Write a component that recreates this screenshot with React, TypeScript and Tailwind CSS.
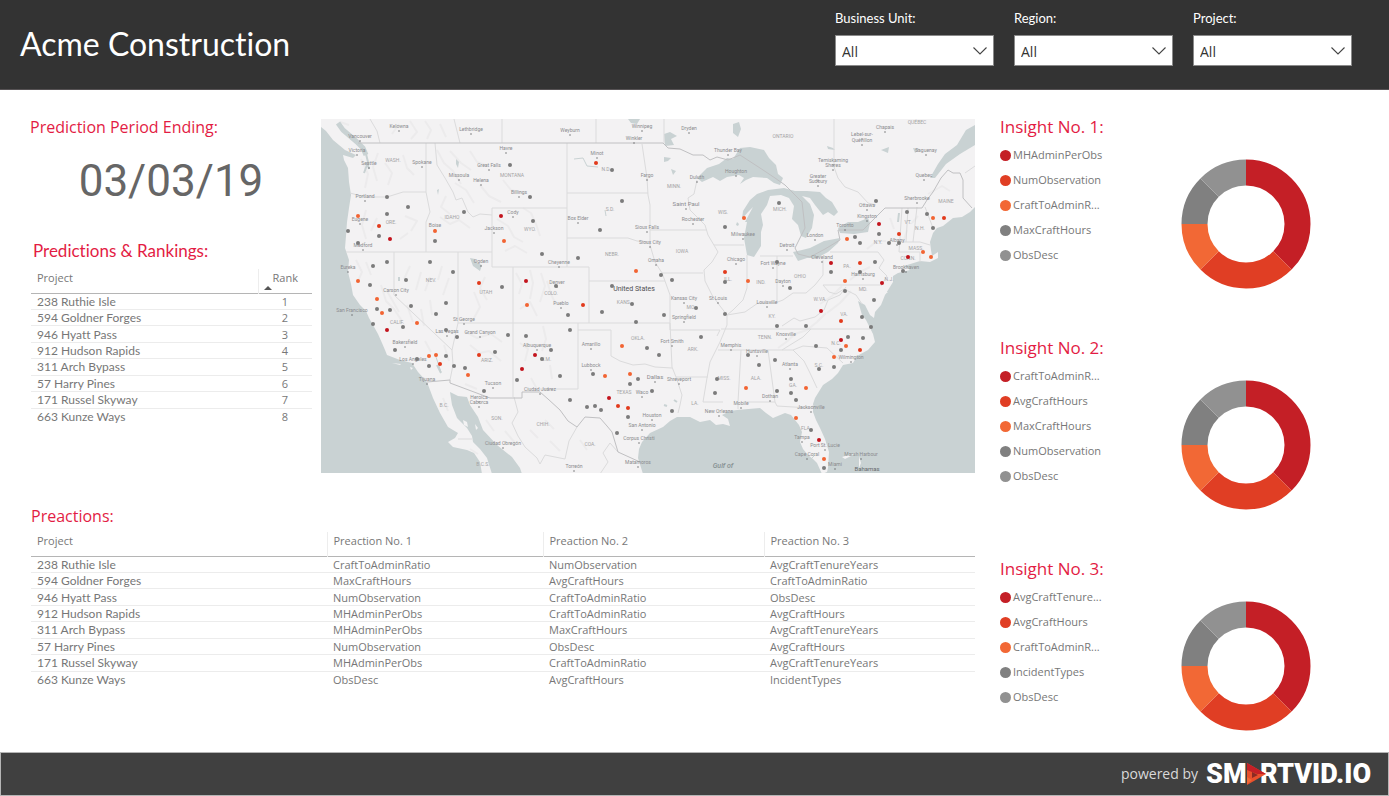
import { clsx } from 'clsx';

type Point = [number, number];

const DARK = '#c41f26';
const RED = '#e03e24';
const ORANGE = '#f26835';
const GRAY = '#808080';
const LIGHT = '#919191';
const SLICE_COLORS = [DARK, RED, ORANGE, GRAY, LIGHT];
const SLICE_VALUES = [3, 2, 1, 1, 1];

const filters = [
    { id: 'unit', label: 'Business Unit:' },
    { id: 'region', label: 'Region:' },
    { id: 'project', label: 'Project:' },
];

const rows = [
    ['238 Ruthie Isle', 'CraftToAdminRatio', 'NumObservation', 'AvgCraftTenureYears'],
    ['594 Goldner Forges', 'MaxCraftHours', 'AvgCraftHours', 'CraftToAdminRatio'],
    ['946 Hyatt Pass', 'NumObservation', 'CraftToAdminRatio', 'ObsDesc'],
    ['912 Hudson Rapids', 'MHAdminPerObs', 'CraftToAdminRatio', 'AvgCraftHours'],
    ['311 Arch Bypass', 'MHAdminPerObs', 'MaxCraftHours', 'AvgCraftTenureYears'],
    ['57 Harry Pines', 'NumObservation', 'ObsDesc', 'AvgCraftHours'],
    ['171 Russel Skyway', 'MHAdminPerObs', 'CraftToAdminRatio', 'AvgCraftTenureYears'],
    ['663 Kunze Ways', 'ObsDesc', 'AvgCraftHours', 'IncidentTypes'],
];

const insights = [
    { title: 'Insight No. 1:', items: ['MHAdminPerObs', 'NumObservation', 'CraftToAdminR...', 'MaxCraftHours', 'ObsDesc'] },
    { title: 'Insight No. 2:', items: ['CraftToAdminR...', 'AvgCraftHours', 'MaxCraftHours', 'NumObservation', 'ObsDesc'] },
    { title: 'Insight No. 3:', items: ['AvgCraftTenure...', 'AvgCraftHours', 'CraftToAdminR...', 'IncidentTypes', 'ObsDesc'] },
];

// Oceans, gulfs and lakes
const water = [
    'M321 127L326 131L333 140L345 150L356 155L353 158L343 155L344 160L348 168L349 182L351 195L349 208L347 222L346 236L345 248L349 260L348 272L351 284L353 295L360 305L366 311L369 318L373 325L378 334L382 343L385 350L387 355L400 360L412 363L418 372L427 382L430 390L433 398L440 413L448 427L458 433L455 438L448 442L453 447L467 450L474 453L480 462L482 474L321 474Z',
    'M450 392L458 396L467 397L470 405L478 417L483 430L497 445L512 457L520 468L522 474L492 474L487 458L480 449L473 442L472 436L467 428L457 418L452 405Z',
    'M643 474L638 458L639 449L642 442L650 433L663 427L670 421L677 417L690 417L700 422L710 420L716 425L723 424L730 426L728 419L722 415L730 411L737 410L760 408L766 413L773 418L785 413L791 415L795 420L799 425L802 432L800 442L803 449L808 455L813 459L817 463L822 474L827 472L828 468L829 452L825 439L820 428L816 420L813 412L813 404L815 398L823 385L832 379L838 373L843 365L853 363L857 356L868 350L875 342L873 334L870 328L866 320L862 315L858 301L865 305L870 315L874 318L875 312L881 305L885 295L893 282L893 276L898 273L910 270L904 266L920 261L930 262L938 258L938 252L932 256L931 250L930 242L933 233L937 228L943 226L953 218L962 217L970 212L975 207V474Z',
    'M975 125L966 130L957 145L945 154L938 164L930 178L935 178L946 164L960 154L975 145Z',
    'M697 178L707 168L719 164L727 158L733 159L740 148L750 147L764 150L769 158L776 165L778 174L783 178L780 185L774 183L767 178L753 177L746 180L740 184L744 178L739 175L727 177L720 181L713 177L702 182Z',
    'M747 255L744 238L747 222L745 222L753 207L748 212L742 219L743 211L750 200L757 194L768 190L784 188L795 191L807 191L820 192L826 198L832 202L838 212L834 216L828 212L823 215L815 205L810 198L802 196L810 204L814 215L812 228L806 238L801 236L798 225L792 219L794 206L789 198L781 195L770 196L767 205L761 214L763 225L761 232L761 246L754 257Z',
    'M793 252L802 250L810 248L824 241L840 238L838 243L828 252L817 258L807 258L798 261Z',
    'M838 228L848 222L858 222L868 218L870 223L868 232L854 234L840 233Z',
    'M470 258L475 259L477 263L482 265L480 271L473 266Z',
    'M733 124L739 122L741 129L738 137L733 133Z',
    'M628 119H640L637 124L631 123Z',
    'M664 134L670 132L677 136L671 139L674 145L665 146Z',
    'M664 157L671 158L668 161L664 162Z',
    'M671 169L676 171L673 175Z',
    'M827 146L833 148L835 150L828 149Z',
    'M881 150L889 147L888 153Z',
    'M913 148L920 149L915 153Z',
    'M737 222L739 224L738 226L736 225Z',
    'M437 190L439 189L438 195Z',
    'M456 159L459 162L458 168L456 164Z',
];

const nationalBorder = [
    'M358 143H663L668 148L680 149L693 155L703 155L710 160L717 157L728 160L740 155L760 168L775 178L785 185L802 202L805 228L795 248L798 254L810 257L825 249L840 240L838 230H863L885 208H922L927 200L933 192L941 178L948 170L953 173L960 173L963 180L963 198L972 208',
    'M427 382L450 380L450 383L490 398H522V392H540L548 399L560 410L568 421L577 427L585 417L600 418L607 426L612 432L618 452L629 457L640 462',
];

const stateLines = [
    'M426 143V192M350 193L365 197L387 197L403 192L426 192L430 212L426 222V252M346 252H492M435 143L437 165L445 178L453 192L456 200L462 198L468 212L473 217L480 214L492 215',
    'M492 208H567M492 208V267M567 143V267M492 267H589V323M513 267V397M394 252V295L452 350L453 365L450 380M458 252V323L452 350M458 323H670',
    'M567 193H648M567 238H628L637 241L648 242M642 144L647 178L648 195L650 205V245L655 262L662 273L665 281L670 295V330M589 281H665M650 230H707M662 273H703',
    'M697 180L694 194L688 198L690 210L705 225L708 235L718 252L712 262L704 270L705 281L712 295L720 306L727 315V325L720 342L710 362L707 378L703 402H723',
    'M714 245H744M747 255V288L743 300L733 310L727 315L745 312L758 303L775 303L783 300L793 293L806 293L815 285L823 275V260M760 256H793M777 256V302',
    'M578 323V389H540M578 330H611V356L620 361L633 365L645 364L655 367L672 368M670 323L672 367L676 377L682 395L680 405L678 413M671 330H720L717 336M676 377H708',
    'M721 329H870M718 350H793M741 350L738 402V409M768 350L775 402L777 406L810 408L814 405M745 402H775M793 350L804 361L810 373L817 388M793 350L803 346L827 348L843 363M782 350L790 345L803 337L811 329',
    'M823 285H880M830 252H878L884 260L879 268L887 276L881 286M902 208L899 252M899 242H920L930 245M899 252L920 252V262M908 208L906 242M917 207L913 242M925 207L933 228M823 285L829 292L836 294L844 289L856 295L862 304',
    'M782 326L794 318L800 321L815 317L824 310L828 300L840 295L846 287M370 119L377 131L380 143M454 119L460 143M502 119V143M596 119V143M664 119V143M834 119V167L838 178L845 187L858 192L868 203L876 205',
    'M514 397L518 412L512 423L518 436L525 447L537 458L540 464L545 455L565 459L569 441L577 427M600 474L608 462L603 453L610 443L618 452M458 439H472M965 173L975 166',
];

// Mountain relief, faint strokes
const relief = [
    'M356 260L362 272L358 281M366 262L371 275M381 285L386 301L394 309L402 321M387 291L399 312M410 266L404 279M421 272L416 290M430 277L425 291M442 266L438 280M449 278L443 295M407 305L413 322M421 309L424 326M430 300L432 315',
    'M437 150L444 163L453 171L461 184M450 151L461 163L471 170M470 151L477 162L488 166M446 196L441 207L450 214M455 183L466 190L474 203M480 185L489 196L501 202M503 180L511 190L523 193M440 217L450 224L459 220L470 228',
    'M497 219L508 226L514 237L523 242M523 208L531 213L536 224L540 236M505 251L515 246L527 253M516 273L522 284L519 294M530 270L533 283L530 299M541 273L545 286L540 302M547 281L551 294L556 305M520 309L530 302L537 316',
    'M361 159L368 174L365 188M378 153L373 167L377 181M385 163L392 173L388 185M403 155L407 168L414 175M366 210L362 225L366 239M377 218L371 231M405 216L417 221L411 231M400 239L408 233M485 277L480 288L487 300M474 292L480 307L474 318',
    'M466 332L477 338L491 334L502 342M470 345L480 353L489 351L501 361M520 343L528 349L525 361M543 326L546 339L542 351M531 378L537 389M550 365L552 379M425 341L431 352M444 345L449 361M465 384L477 389',
    'M786 342L795 334L807 330L817 322L826 313M778 348L789 340M820 304L832 296L842 286M827 313L840 303L851 291M850 280L860 272L870 267M867 249L877 241L886 241M890 218L894 229M907 230L904 240M928 194L942 186L950 191M912 223L918 216',
    'M399 124L392 134M410 121L417 132L411 139M425 121L431 130L427 139M440 124L446 137M340 122L349 125M530 430L538 438M545 420L554 429M486 420L494 431M505 431L515 443M550 441L560 451M580 440L587 450M443 398L448 411M470 449L478 454',
];

const cities: [string, number, number, number?][] = [
    ['Kelowna', 399, 128], ['Vancouver', 360, 138], ['Victoria', 357, 152], ['Seattle', 369, 165], ['Spokane', 422, 164], ['Lethbridge', 471, 131],
    ['Havre', 506, 150], ['Great Falls', 489, 167], ['Missoula', 459, 177], ['Helena', 481, 182], ['Billings', 519, 194], ['Portland', 365, 198],
    ['Eugene', 360, 221], ['Medford', 363, 247], ['Boise', 435, 227], ['Cody', 513, 214], ['Jackson', 494, 230], ['Ogden', 481, 263],
    ['Eureka', 348, 269], ['Carson City', 396, 292], ['San Francisco', 352, 312], ['St George', 464, 321], ['Las Vegas', 447, 333],
    ['Grand Canyon', 480, 334], ['Bakersfield', 405, 344], ['Los Angeles', 413, 361], ['Tijuana', 427, 381], ['Tucson', 493, 385],
    ['Heroica', 479, 399], ['Caborca', 479, 404], ['Ciudad Obregón', 503, 445], ['Weyburn', 570, 132], ['Winnipeg', 642, 128], ['Winkler', 634, 140],
    ['Dryden', 689, 130], ['Thunder Bay', 728, 152], ['Minot', 597, 155], ['Fargo', 647, 177], ['Duluth', 697, 179], ['Houghton', 736, 173],
    ['Saint Paul', 686, 206, 6], ['Rochester', 693, 221], ['Box Elder', 578, 220], ['Sioux Falls', 647, 229], ['Sioux City', 650, 244],
    ['Omaha', 656, 262], ['Milwaukee', 743, 236], ['Chicago', 736, 261], ['Cheyenne', 559, 264], ['Denver', 557, 284],
    ['Pueblo', 561, 305], ['Kansas City', 684, 300], ['St Louis', 718, 300], ['Springfield', 684, 319], ['Amarillo', 591, 346],
    ['Fort Smith', 672, 343], ['Memphis', 731, 347], ['Albuquerque', 537, 347], ['Lubbock', 591, 367], ['Dallas', 655, 379, 6],
    ['Shreveport', 679, 381], ['Waco', 642, 394], ['Ciudad Juárez', 540, 391], ['Houston', 652, 417], ['San Antonio', 642, 427],
    ['Corpus Christi', 639, 440], ['Matamoros', 638, 464], ['Torreón', 574, 468], ['New Orleans', 719, 413], ['Mobile', 741, 405],
    ['Huntsville', 757, 353], ['Chapais', 885, 129], ['Lebel-sur-', 862, 136], ['Quévillon', 862, 142], ['Saguenay', 926, 152],
    ['Temiskaming', 833, 162], ['Shores', 833, 167], ['Greater', 818, 178], ['Sudbury', 818, 183], ['Quebec', 924, 177],
    ['Sherbrooke', 917, 200], ['Ottawa', 867, 207], ['Kingston', 867, 218], ['Toronto', 845, 227], ['London', 815, 237],
    ['Detroit', 787, 247], ['Cleveland', 822, 259], ['Fort Wayne', 773, 265], ['Dayton', 783, 283], ['Albany', 897, 242],
    ['Brookhaven', 906, 269], ['Harrisburg', 863, 276], ['Louisville', 767, 304], ['Knoxville', 786, 336], ['Wilmington', 851, 359],
    ['Atlanta', 790, 366], ['Dothan', 770, 398], ['Jacksonville', 811, 409], ['Tampa', 802, 439], ['Port St. Lucie', 825, 447],
    ['Cape Coral', 807, 456], ['Miami', 835, 466], ['Marsh Harbour', 861, 456],
];

const states: [string, number, number][] = [
    ['WASH.', 393, 162], ['MONTANA', 512, 177], ['ORE.', 391, 224], ['IDAHO', 452, 219], ['WYO.', 530, 231], ['NEV.', 431, 282],
    ['UTAH', 486, 294], ['COLO.', 551, 295], ['CALIF.', 397, 324], ['ARIZ.', 487, 362], ['N.M.', 546, 361], ['N.D.', 606, 171],
    ['S.D.', 610, 211], ['NEBR.', 612, 256], ['MINN.', 674, 188], ['WIS.', 723, 214], ['IOWA', 682, 253], ['ILL.', 728, 281],
    ['IND.', 761, 284], ['KANS.', 624, 304], ['MO.', 691, 309], ['OKLA.', 638, 340], ['ARK.', 693, 351], ['TEXAS', 624, 394],
    ['LA.', 695, 405], ['MISS.', 724, 380], ['ALA.', 756, 380], ['GA.', 793, 387], ['FLA.', 806, 430], ['S.C.', 819, 367],
    ['N.C.', 836, 345], ['VA.', 844, 316], ['W.VA.', 820, 301], ['KY.', 772, 318], ['TENN.', 765, 339], ['OHIO', 800, 278],
    ['PA.', 847, 268], ['MD.', 863, 291], ['N.J.', 889, 281], ['N.Y.', 878, 244], ['VT.', 908, 224], ['N.H.', 920, 230],
    ['MASS.', 916, 250], ['CONN.', 908, 260], ['MAINE', 946, 203], ['MICH.', 780, 211], ['ONTARIO', 783, 138], ['QUÉBEC', 917, 124],
    ['B.C.', 444, 407], ['SON.', 497, 420], ['CHIH.', 543, 426], ['COA.', 590, 446], ['B.C.S.', 483, 466],
];

const sites: { color: string; points: Point[] }[] = [
    {
        color: '#7b7b7b',
        points: [
            [510, 165], [387, 197], [408, 207], [387, 214], [464, 212], [530, 197], [533, 221], [348, 231], [379, 236], [435, 241],
            [358, 243], [387, 262], [373, 266], [430, 262], [453, 272], [406, 280], [370, 285], [502, 287], [612, 170], [622, 201],
            [600, 230], [725, 227], [542, 254], [578, 258], [661, 275], [672, 280], [556, 286], [612, 286], [725, 282], [779, 203],
            [907, 212], [876, 201], [927, 214], [933, 228], [879, 234], [855, 237], [860, 243], [889, 243], [899, 243], [875, 262],
            [777, 262], [831, 272], [860, 272], [903, 271], [790, 288], [845, 291], [377, 309], [390, 310], [411, 306], [446, 303],
            [436, 314], [373, 324], [403, 327], [446, 330], [457, 337], [508, 335], [526, 336], [395, 350], [495, 352], [446, 356],
            [417, 359], [429, 366], [454, 366], [465, 368], [517, 380], [484, 391], [632, 304], [568, 315], [602, 312], [636, 322],
            [664, 315], [696, 308], [725, 314], [570, 330], [701, 337], [647, 348], [659, 355], [551, 350], [542, 359], [560, 376],
            [593, 374], [638, 379], [630, 384], [652, 391], [570, 400], [587, 407], [595, 406], [601, 410], [672, 411], [628, 417],
            [617, 433], [717, 379], [715, 393], [748, 355], [759, 365], [874, 300], [862, 317], [777, 326], [806, 326], [871, 327],
            [848, 337], [863, 338], [816, 346], [841, 350], [775, 360], [834, 367], [819, 369], [791, 379], [777, 391], [791, 393],
            [796, 400], [811, 430], [824, 468],
        ],
    },
    {
        color: '#f26432',
        points: [
            [358, 216], [435, 231], [504, 241], [358, 281], [744, 218], [636, 271], [748, 281], [933, 218], [847, 239], [923, 252],
            [931, 257], [845, 281], [377, 299], [382, 313], [417, 323], [527, 305], [429, 356], [436, 355], [468, 375], [622, 346],
            [605, 376], [630, 374], [746, 388], [846, 346], [834, 357], [806, 388], [796, 418], [824, 459],
        ],
    },
    {
        color: '#e23a1c',
        points: [
            [379, 226], [479, 283], [596, 163], [725, 272], [944, 218], [899, 234], [860, 263], [479, 355], [440, 364], [583, 305],
            [618, 406], [628, 408], [841, 321], [860, 350],
        ],
    },
    {
        color: '#c3141d',
        points: [
            [501, 216], [390, 239], [526, 281], [879, 224], [908, 257], [831, 263], [882, 283], [387, 330], [535, 355], [522, 369],
            [609, 398], [821, 311], [841, 340], [819, 440],
        ],
    },
];

function SiteMap() {
    return (
        <svg viewBox="321 119 654 354" className="block h-auto w-full bg-[#f3f2f3] font-['Roboto',sans-serif]" role="img" aria-label="Project sites">
            <g fill="none" stroke="#ecebec" strokeWidth="2" strokeLinejoin="round">
                {relief.map((d) => <path key={d} d={d} />)}
            </g>
            <g fill="#c9d2d3">
                {water.map((d) => <path key={d} d={d} />)}
            </g>
            <g fill="none" stroke="#c9d2d3" strokeLinejoin="round">
                <path d="M338 123L343 130L350 136L357 142L363 148L366 155" strokeWidth="5" />
                <path d="M366 154L368 162L364 173M367 162L369 169" strokeWidth="2" />
                <path d="M574 159L583 158L587 166L598 167M435 354L441 372M811 459L815 455M605 210L606 216" strokeWidth="1" />
                <path d="M437 365L441 373M899 213L898 222M399 277V281M664 405L667 406M674 400L677 402" strokeWidth="2" />
            </g>
            <g fill="#f3f2f3">
                <path d="M463 420L467 422L468 427L464 425ZM475 424L478 428L476 430ZM884 295L888 292L883 292ZM392 363L401 364L400 365ZM842 457L855 453L853 455L845 459ZM859 456L861 463L859 468ZM410 367L413 368L411 370Z" />
            </g>
            <g fill="none" stroke="#dbdbdc" strokeWidth="1" strokeLinejoin="round">
                {stateLines.map((d) => <path key={d} d={d} />)}
            </g>
            <g fill="none" stroke="#c0c0c2" strokeWidth="1" strokeLinejoin="round">
                {nationalBorder.map((d) => <path key={d} d={d} />)}
            </g>
            <g fill="#a3a3a5" fontSize="5" textAnchor="middle">
                {states.map(([name, x, y]) => <text key={name} x={x} y={y}>{name}</text>)}
            </g>
            <g fill="#8a8b8e" textAnchor="middle">
                {cities.map(([name, x, y, size]) => (
                    <g key={name}>
                        <text x={x} y={y} fontSize={size ?? 5}>{name}</text>
                        <circle cx={x} cy={y + 3} r="0.7" fill="#5c5c5e" />
                    </g>
                ))}
            </g>
            <text x="634" y="291" fontSize="7" fill="#4f4f52" textAnchor="middle">United States</text>
            <text x="867" y="471" fontSize="6" fill="#66696b" textAnchor="middle">Bahamas</text>
            <text x="723" y="468" fontSize="7" fontStyle="italic" fontWeight="500" fill="#859092" textAnchor="middle">Gulf of</text>
            {sites.map(({ color, points }) => (
                <g key={color} fill={color}>
                    {points.map(([x, y]) => <circle key={`${x}-${y}`} cx={x} cy={y} r="2" />)}
                </g>
            ))}
        </svg>
    );
}

function Donut() {
    let start = 0;
    return (
        <svg viewBox="0 0 130 130" className="mt-4 size-[130px] shrink-0" aria-hidden="true">
            <g transform="rotate(-90 65 65)" fill="none" strokeWidth="26">
                {SLICE_VALUES.map((value, i) => {
                    const offset = -start;
                    start += value;
                    return (
                        <circle key={SLICE_COLORS[i]} cx="65" cy="65" r="51.5" pathLength={8} stroke={SLICE_COLORS[i]} strokeDasharray={`${value} 8`} strokeDashoffset={offset} />
                    );
                })}
            </g>
        </svg>
    );
}

function Filter({ id, label }: { id: string; label: string }) {
    return (
        <div className="w-[159px]">
            <label htmlFor={id} className="block font-['Lato',sans-serif] text-[13px] leading-4 text-white">{label}</label>
            <div className="relative mt-[9px]">
                <select id={id} className="block h-[31px] w-full appearance-none rounded-none border border-[#8a8a8a] bg-white px-1.5 pt-0.5 text-sm leading-5 text-[#333]">
                    <option>All</option>
                </select>
                <svg viewBox="0 0 14 8" className="pointer-events-none absolute top-3 right-[7px] h-2 w-3.5" fill="none" stroke="#444" strokeWidth="1.1">
                    <path d="M0.5 0.5L7 7L13.5 0.5" />
                </svg>
            </div>
        </div>
    );
}

function Logo() {
    return (
        <svg viewBox="0 -6 168 36" className="h-9 w-[168px] font-['Roboto',sans-serif] font-black" role="img" aria-label="SMARTVID.IO">
            <g fill="#fff" fontSize="27">
                <text x="0" y="21">SM</text>
                <text x="54" y="21">RTVID.IO</text>
            </g>
            <path d="M41 1L60 12L41 23Z" fill="#e8502c" />
            <path d="M41 1L60 12L51 12L41 8Z" fill="#c41f26" />
            <path d="M46 10L52 13L46 16Z" fill="#8a2a24" />
            <path d="M41 15L46 18L41 22Z" fill="#f26835" />
        </svg>
    );
}

export default function App() {
    return (
        <div className="flex min-h-screen flex-col bg-white font-['Open_Sans',sans-serif] text-[11px] text-[#777] [font-variant-ligatures:none]">
            <header className="flex justify-between border-b border-[#565254] bg-[#333] pr-[37px] pb-[23px] pl-5">
                <h1 className="pt-6 font-['Lato',sans-serif] text-[32px] leading-10 text-white">Acme Construction</h1>
                <div className="flex gap-5 pt-2.5">
                    {filters.map((f) => <Filter key={f.id} {...f} />)}
                </div>
            </header>

            <main className="flex pt-[29px] pb-5">
                <div className="min-w-0 flex-1 pl-[30px]">
                    <div className="flex">
                        <section className="w-[291px] shrink-0 pr-[9px]">
                            <h2 className="text-base leading-4 text-[#e31c44]">Prediction Period Ending:</h2>
                            <p className="mt-6 text-center font-['Roboto',sans-serif] text-[44px] leading-[44px] text-[#666]">03/03/19</p>
                            <h2 className="mt-9 pl-[3px] font-['Lato',sans-serif] text-[17px] leading-6 text-[#e31c44]">Predictions &amp; Rankings:</h2>
                            <div className="mt-1.5 pl-px">
                                <table className="h-[155px] w-full">
                                    <thead>
                                        <tr className="border-b border-[#b5b5b5] leading-4">
                                            <th className="h-6 pb-1.5 pl-1.5 text-left font-normal">Project</th>
                                            <th className="h-6 w-[54px] border-l border-[#ededed] pb-1.5 font-normal">
                                                <span className="relative block">
                                                    Rank
                                                    <svg viewBox="0 0 8 4" className="absolute top-4 left-[5px] h-1 w-2" fill="#555"><path d="M0 4L4 0L8 4Z" /></svg>
                                                </span>
                                            </th>
                                        </tr>
                                    </thead>
                                    <tbody className="leading-[15px]">
                                        {rows.map(([project], i) => (
                                            <tr key={project} className={clsx(i < rows.length - 1 && 'border-b border-[#ececec]')}>
                                                <td className="pl-1.5 font-['Lato',sans-serif] text-xs leading-[15px]">{project}</td>
                                                <td className="text-center">{i + 1}</td>
                                            </tr>
                                        ))}
                                    </tbody>
                                </table>
                            </div>
                        </section>
                        <div className="min-w-0 flex-1">
                            <SiteMap />
                        </div>
                    </div>

                    <section className="mt-[31px] pl-px">
                        <h2 className="text-base leading-6 text-[#e31c44]">Preactions:</h2>
                        <table className="mt-1 h-[155px] w-full table-fixed">
                            <thead>
                                <tr className="border-b border-[#b5b5b5] text-left leading-4">
                                    <th className="h-6 w-[296px] pb-1.5 pl-1.5 font-normal">Project</th>
                                    <th className="h-6 w-[216px] border-l border-[#ededed] pb-1.5 pl-1.5 font-normal">Preaction No. 1</th>
                                    <th className="h-6 w-[221px] border-l border-[#ededed] pb-1.5 pl-1.5 font-normal">Preaction No. 2</th>
                                    <th className="h-6 border-l border-[#ededed] pb-1.5 pl-1.5 font-normal">Preaction No. 3</th>
                                </tr>
                            </thead>
                            <tbody className="leading-[15px]">
                                {rows.map(([project, ...preactions], i) => (
                                    <tr key={project} className={clsx(i < rows.length - 1 && 'border-b border-[#ececec]')}>
                                        <td className="pl-1.5 font-['Lato',sans-serif] text-xs leading-[15px]">{project}</td>
                                        {preactions.map((name, n) => <td key={n} className="pl-1.5">{name}</td>)}
                                    </tr>
                                ))}
                            </tbody>
                        </table>
                    </section>
                </div>

                <aside className="flex w-[414px] shrink-0 flex-col gap-[51px] pl-[25px]">
                    {insights.map(({ title, items }) => (
                        <section key={title}>
                            <h2 className="text-[17px] leading-4 text-[#e31c44]">{title}</h2>
                            <div className="flex pt-2">
                                <ul className="w-[181px] shrink-0">
                                    {items.map((item, i) => (
                                        <li key={item} className="flex h-[25px] items-center gap-0.5">
                                            <span className="size-[11px] rounded-full" style={{ backgroundColor: SLICE_COLORS[i] }} />
                                            {item}
                                        </li>
                                    ))}
                                </ul>
                                <Donut />
                            </div>
                        </section>
                    ))}
                </aside>
            </main>

            <footer className="mt-auto flex h-11 items-center justify-end gap-2 border border-[#b5b5b5] bg-[#404040] pr-3.5 text-sm text-[#d9d9d9]">
                <span>powered by</span>
                <Logo />
            </footer>
        </div>
    );
}
